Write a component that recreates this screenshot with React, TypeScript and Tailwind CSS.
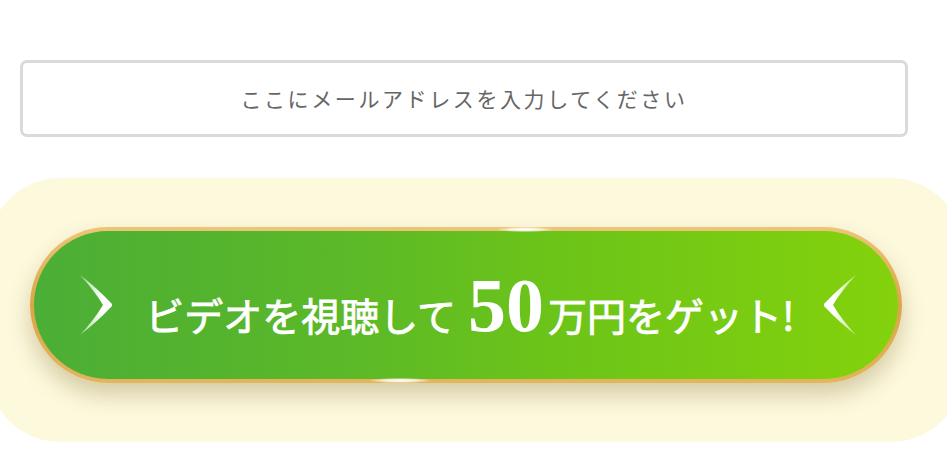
import React from "react";

const Chevron = ({ dir }: { dir: "right" | "left" }) => (
  <svg width="34" height="62" viewBox="0 0 34 62" className={dir === "left" ? "-scale-x-100" : ""}>
    <defs>
      <linearGradient id={`cg-${dir}`} x1="0" y1="0" x2="1" y2="0">
        <stop offset="0" stopColor="#ffffff" stopOpacity="0.5" />
        <stop offset="0.7" stopColor="#ffffff" stopOpacity="1" />
        <stop offset="1" stopColor="#ffffff" stopOpacity="1" />
      </linearGradient>
    </defs>
    <path d="M1 1 Q18 14 33 30 L33 32 Q18 48 1 61 Q15 46 24 31 Q15 16 1 1 Z" fill={`url(#cg-${dir})`} />
  </svg>
);

export default function App() {
  const jp = { fontFamily: '"Noto Sans CJK JP", "Noto Sans", sans-serif' };
  return (
    <div className="w-[947px] h-[455px] bg-white overflow-hidden">
      <div className="pt-[60px] pl-[20px]">
        <div className="w-[888px] h-[77px] border-[3px] border-[#dadada] rounded-[7px] bg-white flex items-center justify-center">
          <span className="text-[21px] tracking-[2.6px] text-[#666666]" style={jp}>
            ここにメールアドレスを入力してください
          </span>
        </div>
      </div>
      <div className="mt-[41px] ml-[-12px] w-[975px] h-[264px] rounded-[72px] bg-[#fdf9dd] pt-[49px] pl-[42px]">
        <div className="relative w-[872px] h-[156px] rounded-full p-[4px] bg-[linear-gradient(180deg,#ecc677_0%,#d9a748_50%,#e3b55c_100%)] shadow-[0_12px_22px_rgba(130,110,50,0.32)]">
          <div className="w-full h-full rounded-full bg-[linear-gradient(90deg,#4bae36_0%,#5bb828_35%,#6cc419_60%,#84d20c_100%)] flex items-center justify-center pl-[4px]">
            <Chevron dir="right" />
            <div className="flex items-baseline text-white ml-[32px] mr-[28px]">
              <span className="text-[39px] leading-none [-webkit-text-stroke:0.8px_white]" style={jp}>
                ビデオを視聴して
              </span>
              <span
                className="text-[76px] font-bold leading-none ml-[12px] mr-[4px]"
                style={{ fontFamily: '"Liberation Serif", serif' }}
              >
                50
              </span>
              <span className="text-[39px] leading-none [-webkit-text-stroke:0.8px_white]" style={jp}>
                万円をゲット!
              </span>
            </div>
            <Chevron dir="left" />
          </div>
          <div className="absolute top-0 left-[468px] w-[54px] h-[5px] rounded-full bg-[radial-gradient(ellipse_at_center,#ffffff_0%,rgba(255,255,255,0.7)_40%,rgba(255,255,255,0)_75%)]" />
          <div className="absolute bottom-0 left-[340px] w-[60px] h-[5px] rounded-full bg-[radial-gradient(ellipse_at_center,#ffffff_0%,rgba(255,255,255,0.7)_40%,rgba(255,255,255,0)_75%)]" />
        </div>
      </div>
    </div>
  );
}
